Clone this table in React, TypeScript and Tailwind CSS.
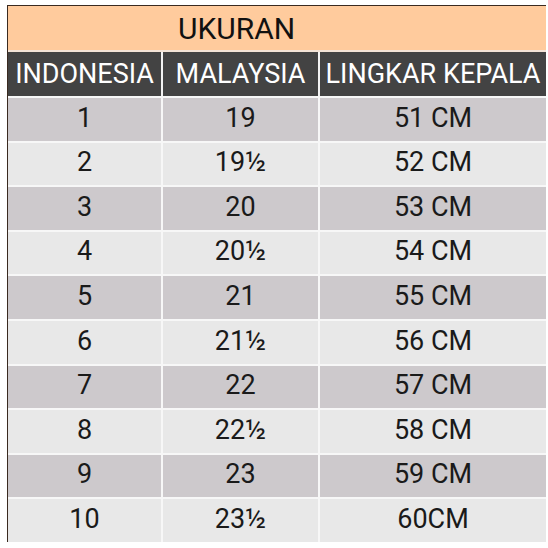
import React from 'react';

const rows: [string, string, string][] = [
    ['1', '19', '51 CM'],
    ['2', '19½', '52 CM'],
    ['3', '20', '53 CM'],
    ['4', '20½', '54 CM'],
    ['5', '21', '55 CM'],
    ['6', '21½', '56 CM'],
    ['7', '22', '57 CM'],
    ['8', '22½', '58 CM'],
    ['9', '23', '59 CM'],
    ['10', '23½', '60CM'],
];

const App: React.FC = () => {
    return (
        <div className="w-[548px] h-[548px] bg-white pt-[5px] pl-[7px] pr-[2px] font-['Roboto',sans-serif]">
            <div className="border-t border-l border-[#3a2a20]">
                {/* Title */}
                <div className="h-[44px] bg-[#ffcb9d] flex items-center pl-[170px] text-[30px] text-[#111]">
                    UKURAN
                </div>

                {/* Column headers */}
                <div className="grid grid-cols-[153px_155px_1fr] gap-x-[2px] border-t-2 border-[#f3e3d6] bg-[#f2f2f2]">
                    {['INDONESIA', 'MALAYSIA', 'LINGKAR KEPALA'].map((h) => (
                        <div key={h} className="h-[44px] bg-[#434343] text-white text-[27px] flex items-center justify-center whitespace-nowrap">
                            {h}
                        </div>
                    ))}
                </div>

                {/* Body */}
                {rows.map((r, i) => (
                    <div key={r[0]} className="grid grid-cols-[153px_155px_1fr] gap-x-[2px] border-t-2 border-[#f7f7f7] bg-[#f7f7f7]">
                        {r.map((c, j) => (
                            <div
                                key={j}
                                className={`h-[42.6px] pb-[3px] flex items-center justify-center text-[27px] text-[#1a1a1a] ${i % 2 === 0 ? 'bg-[#cdc9cc]' : 'bg-[#e8e8e8]'}`}
                            >
                                {c}
                            </div>
                        ))}
                    </div>
                ))}
            </div>
        </div>
    );
};

export default App;
